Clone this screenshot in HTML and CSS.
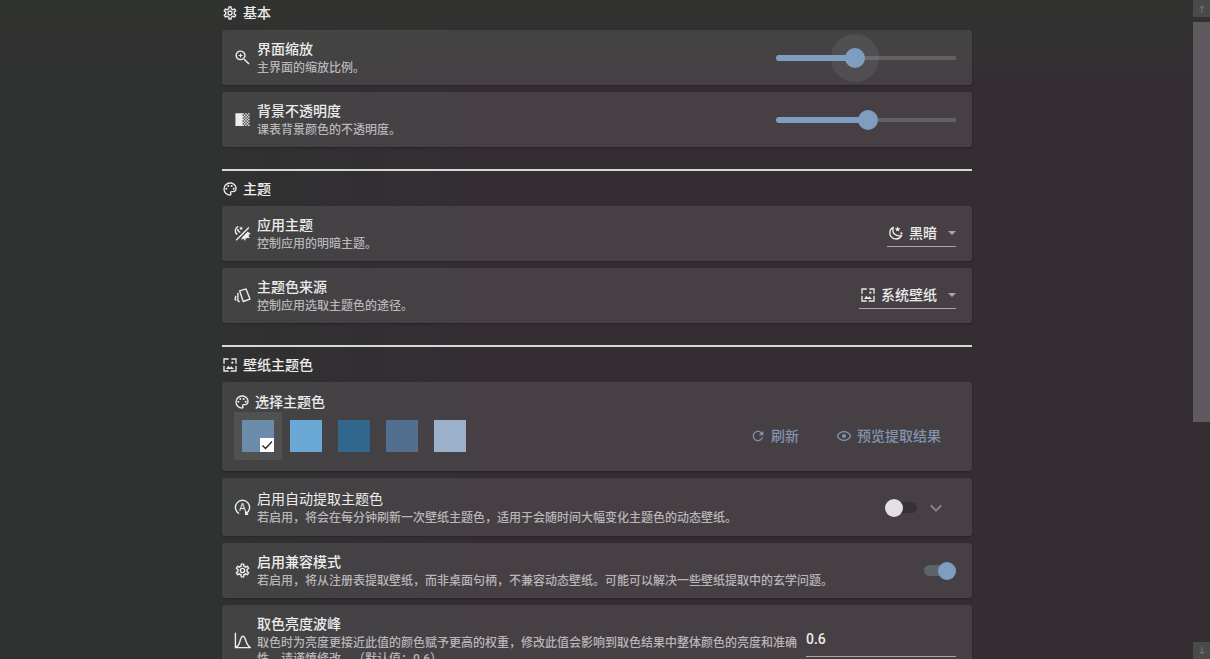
FILE: index.html
```html
<!DOCTYPE html>
<html lang="zh-CN">
<head>
<meta charset="utf-8">
<meta name="viewport" content="width=device-width, initial-scale=1">
<title>外观</title>
<link rel="stylesheet" href="styles.css">
</head>
<body>
<svg class="sprite" aria-hidden="true">
  <symbol id="cog" viewBox="0 0 24 24"><path d="M12,8A4,4 0 0,1 16,12A4,4 0 0,1 12,16A4,4 0 0,1 8,12A4,4 0 0,1 12,8M12,10A2,2 0 0,0 10,12A2,2 0 0,0 12,14A2,2 0 0,0 14,12A2,2 0 0,0 12,10M10,22C9.75,22 9.54,21.82 9.5,21.58L9.13,18.93C8.5,18.68 7.96,18.34 7.44,17.94L4.95,18.95C4.73,19.03 4.46,18.95 4.34,18.73L2.34,15.27C2.21,15.05 2.27,14.78 2.46,14.63L4.57,12.97L4.5,12L4.57,11L2.46,9.37C2.27,9.22 2.21,8.95 2.34,8.73L4.34,5.27C4.46,5.05 4.73,4.96 4.95,5.05L7.44,6.05C7.96,5.66 8.5,5.32 9.13,5.07L9.5,2.42C9.54,2.18 9.75,2 10,2H14C14.25,2 14.46,2.18 14.5,2.42L14.87,5.07C15.5,5.32 16.04,5.66 16.56,6.05L19.05,5.05C19.27,4.96 19.54,5.05 19.66,5.27L21.66,8.73C21.79,8.95 21.73,9.22 21.54,9.37L19.43,11L19.5,12L19.43,13L21.54,14.63C21.73,14.78 21.79,15.05 21.66,15.27L19.66,18.73C19.54,18.95 19.27,19.04 19.05,18.95L16.56,17.95C16.04,18.34 15.5,18.68 14.87,18.93L14.5,21.58C14.46,21.82 14.25,22 14,22H10M11.25,4L10.88,6.61C9.68,6.86 8.62,7.5 7.85,8.39L5.44,7.35L4.69,8.65L6.8,10.2C6.4,11.37 6.4,12.64 6.8,13.8L4.68,15.36L5.43,16.66L7.86,15.62C8.63,16.5 9.68,17.14 10.87,17.38L11.24,20H12.76L13.13,17.39C14.32,17.14 15.37,16.5 16.14,15.62L18.57,16.66L19.32,15.36L17.2,13.81C17.6,12.64 17.6,11.37 17.2,10.2L19.31,8.65L18.56,7.35L16.15,8.39C15.38,7.5 14.32,6.86 13.12,6.62L12.75,4H11.25Z"/></symbol>
  <symbol id="zoom" viewBox="0 0 24 24"><path d="M15.500,14L22,20.500L20.500,22L14,15.500V14.710L13.730,14.430C12.590,15.410 11.110,16 9.500,16A7,7 0 0,1 2,9A7,7 0 0,1 9.500,2A7,7 0 0,1 16.500,9.500C16.500,11.110 15.410,12.590 14.430,13.730L14.710,14H15.500M9.500,14C12,14 14.500,12 14.500,9.200C14.500,6.500 12,4 9.200,4C6.500,4 4,6.500 4,9.200C4,12 6.500,14 9.500,14M12,10H10V12H8.500V10H6.500V8.500H8.500V6.500H10V8.500H12V10Z"/></symbol>
  <symbol id="opacity" viewBox="0 0 24 24"><path d="M2,3H12V21H2ZM12,3h2v2h-2zM16,3h2v2h-2zM20,3h2v2h-2zM14,5h2v2h-2zM18,5h2v2h-2zM12,7h2v2h-2zM16,7h2v2h-2zM20,7h2v2h-2zM14,9h2v2h-2zM18,9h2v2h-2zM12,11h2v2h-2zM16,11h2v2h-2zM20,11h2v2h-2zM14,13h2v2h-2zM18,13h2v2h-2zM12,15h2v2h-2zM16,15h2v2h-2zM20,15h2v2h-2zM14,17h2v2h-2zM18,17h2v2h-2zM12,19h2v2h-2zM16,19h2v2h-2zM20,19h2v2h-2z"/></symbol>
  <symbol id="palette" viewBox="0 0 24 24"><path d="M12,22A10,10 0 0,1 2,12A10,10 0 0,1 12,2C17.5,2 22,6 22,11A6,6 0 0,1 16,17H14.2C13.9,17 13.7,17.2 13.7,17.5C13.7,17.6 13.8,17.7 13.8,17.8C14.2,18.3 14.4,18.9 14.4,19.5C14.5,20.9 13.4,22 12,22M12,4A8,8 0 0,0 4,12A8,8 0 0,0 12,20C12.3,20 12.5,19.8 12.5,19.5C12.5,19.3 12.4,19.2 12.4,19.1C12,18.6 11.8,18.1 11.8,17.5C11.8,16.1 12.9,15 14.3,15H16A4,4 0 0,0 20,11C20,7.1 16.4,4 12,4Z"/><circle cx="6.5" cy="11.5" r="1.5"/><circle cx="9.5" cy="7.5" r="1.5"/><circle cx="14.5" cy="7.5" r="1.5"/><circle cx="17.5" cy="11.5" r="1.5"/></symbol>
  <symbol id="light-dark" viewBox="0 0 24 24"><path fill="none" stroke="currentColor" stroke-width="2" d="M3,21.500L21,3.500M6,2C1,4 .5,10.500 4.500,13.500M5,5.500C5.500,8.500 7,10 9,10.500"/><path d="M10,2l.8,1.700 1.900.2-1.400,1.300.4,1.900-1.700-1-1.700,1 .4-1.900-1.400-1.300 1.900-.2zM19.500,9A5.500,5.500 0 0 1 11,17.500ZM20.500,10l3,2.500-3,1.500zM20,15l2.500,3.500-4-.5zM16.500,18.500l-.5,4-2.500-3zM11,18l2,1-2.500,3z"/></symbol>
  <symbol id="cards" viewBox="0 0 24 24"><path fill="none" stroke="currentColor" stroke-width="2" stroke-linejoin="round" d="M8,5.500L17,2.700L22.500,17L13,20.500ZM5.500,8V19.500L8,21M2.500,12.500L1.500,17L3,19"/></symbol>
  <symbol id="wallpaper" viewBox="0 0 24 24"><path fill="none" stroke="currentColor" stroke-width="2" d="M10,3H3V10M14,3H21V10M3,13V21H10M21,13V21H13"/><path d="M6,18L9.500,13L12,16L14,14L18,18Z"/><circle cx="15.500" cy="8.500" r="1.700"/></symbol>
  <symbol id="moon" viewBox="0 0 24 24"><path fill="none" stroke="currentColor" stroke-width="2" stroke-linejoin="round" d="M8,3.500C1,6.500 1,17 8,20C13,22 18,20 20.500,16C11,17.500 5,12 8,3.500Z"/><path d="M14.500,2l1.200,2.700 3,.3-2.200,2 .6,2.900-2.600-1.500-2.600,1.500.6-2.900-2.200-2 3-.3zM20,10l.7,1.600 1.800.2-1.300,1.200.3,1.700-1.500-.9-1.500.9.300-1.700-1.300-1.200 1.800-.2z"/></symbol>
  <symbol id="refresh" viewBox="0 0 24 24"><path d="M17.65,6.35C16.2,4.9 14.21,4 12,4A8,8 0 0,0 4,12A8,8 0 0,0 12,20C15.73,20 18.84,17.45 19.73,14H17.65C16.83,16.33 14.61,18 12,18A6,6 0 0,1 6,12A6,6 0 0,1 12,6C13.66,6 15.14,6.69 16.22,7.78L13,11H20V4L17.65,6.35Z"/></symbol>
  <symbol id="eye" viewBox="0 0 24 24"><path d="M12,9A3,3 0 0,1 15,12A3,3 0 0,1 12,15A3,3 0 0,1 9,12A3,3 0 0,1 12,9M12,4.500C17,4.500 21.270,7.610 23,12C21.270,16.390 17,19.500 12,19.500C7,19.500 2.730,16.390 1,12C2.730,7.610 7,4.500 12,4.500M3.180,12C4.830,15.360 8.240,17.500 12,17.500C15.760,17.500 19.170,15.360 20.820,12C19.170,8.640 15.760,6.500 12,6.500C8.240,6.500 4.830,8.640 3.180,12Z"/></symbol>
  <symbol id="auto" viewBox="0 0 24 24"><path fill="none" stroke="currentColor" stroke-width="2" d="M7,20.500A10,10 0 1 1 17,20.500M16.500,17V21.500H20"/><text class="auto-letter" x="12" y="17" text-anchor="middle">A</text></symbol>
  <symbol id="curve" viewBox="0 0 24 24"><path fill="none" stroke="currentColor" stroke-width="2" d="M2,1V22H24M3,21C9,21 8,6 12.500,6C17,6 16,18 22.500,21"/></symbol>
  <symbol id="chevron" viewBox="0 0 24 24"><path d="M7.410,8.580L12,13.170L16.590,8.580L18,10L12,16L6,10L7.410,8.580Z"/></symbol>
  <symbol id="check" viewBox="0 0 14 14"><path fill="none" stroke="currentColor" stroke-width="1.300" d="M2.500,7.500L5.500,10.500L12,3.500"/></symbol>
  <symbol id="caret" viewBox="0 0 8 4"><path d="M0,0H8L4,4Z"/></symbol>
  <symbol id="arrow-up" viewBox="0 0 8 8"><path fill="none" stroke="currentColor" d="M4,8V1M1.500,3.500L4,1L6.500,3.500"/></symbol>
  <symbol id="arrow-down" viewBox="0 0 8 8"><path fill="none" stroke="currentColor" d="M4,0V7M1.500,4.500L4,7L6.500,4.500"/></symbol>
</svg>

<div class="window">
  <main class="page">
    <div class="settings">
      <section class="group">
        <h2 class="group-title"><svg class="icon"><use href="#cog"/></svg>基本</h2>
        <div class="card">
          <svg class="card-icon"><use href="#zoom"/></svg>
          <div class="card-text">
            <label class="title" for="scale">界面缩放</label>
            <p class="desc">主界面的缩放比例。</p>
          </div>
          <input class="slider slider-active scale-fill" id="scale" type="range" min="0" max="100" value="43">
        </div>
        <div class="card">
          <svg class="card-icon"><use href="#opacity"/></svg>
          <div class="card-text">
            <label class="title" for="opacity-range">背景不透明度</label>
            <p class="desc">课表背景颜色的不透明度。</p>
          </div>
          <input class="slider opacity-fill" id="opacity-range" type="range" min="0" max="100" value="51">
        </div>
      </section>

      <section class="group">
        <h2 class="group-title"><svg class="icon"><use href="#palette"/></svg>主题</h2>
        <div class="card">
          <svg class="card-icon"><use href="#light-dark"/></svg>
          <div class="card-text">
            <label class="title" for="theme">应用主题</label>
            <p class="desc">控制应用的明暗主题。</p>
          </div>
          <div class="combo">
            <svg class="icon"><use href="#moon"/></svg>
            <select id="theme"><option>黑暗</option></select>
            <svg class="caret"><use href="#caret"/></svg>
          </div>
        </div>
        <div class="card">
          <svg class="card-icon"><use href="#cards"/></svg>
          <div class="card-text">
            <label class="title" for="source">主题色来源</label>
            <p class="desc">控制应用选取主题色的途径。</p>
          </div>
          <div class="combo">
            <svg class="icon"><use href="#wallpaper"/></svg>
            <select id="source"><option>系统壁纸</option></select>
            <svg class="caret"><use href="#caret"/></svg>
          </div>
        </div>
      </section>

      <section class="group">
        <h2 class="group-title"><svg class="icon"><use href="#wallpaper"/></svg>壁纸主题色</h2>
        <div class="card color-card">
          <h3 class="color-title"><svg class="icon"><use href="#palette"/></svg>选择主题色</h3>
          <div class="color-row">
            <div class="swatches" role="radiogroup" aria-label="选择主题色">
              <label class="swatch"><input type="radio" name="color" aria-label="颜色 1" checked><span class="chip chip-1"><svg class="tick"><use href="#check"/></svg></span></label>
              <label class="swatch"><input type="radio" name="color" aria-label="颜色 2"><span class="chip chip-2"><svg class="tick"><use href="#check"/></svg></span></label>
              <label class="swatch"><input type="radio" name="color" aria-label="颜色 3"><span class="chip chip-3"><svg class="tick"><use href="#check"/></svg></span></label>
              <label class="swatch"><input type="radio" name="color" aria-label="颜色 4"><span class="chip chip-4"><svg class="tick"><use href="#check"/></svg></span></label>
              <label class="swatch"><input type="radio" name="color" aria-label="颜色 5"><span class="chip chip-5"><svg class="tick"><use href="#check"/></svg></span></label>
            </div>
            <div class="actions">
              <button class="text-button" type="button"><svg class="icon"><use href="#refresh"/></svg>刷新</button>
              <button class="text-button" type="button"><svg class="icon"><use href="#eye"/></svg>预览提取结果</button>
            </div>
          </div>
        </div>
        <div class="card expander">
          <svg class="card-icon"><use href="#auto"/></svg>
          <div class="card-text">
            <label class="title" for="auto-extract">启用自动提取主题色</label>
            <p class="desc">若启用，将会在每分钟刷新一次壁纸主题色，适用于会随时间大幅变化主题色的动态壁纸。</p>
          </div>
          <input class="switch" id="auto-extract" type="checkbox">
          <button class="expand" type="button" aria-label="展开"><svg><use href="#chevron"/></svg></button>
        </div>
        <div class="card">
          <svg class="card-icon"><use href="#cog"/></svg>
          <div class="card-text">
            <label class="title" for="compat">启用兼容模式</label>
            <p class="desc">若启用，将从注册表提取壁纸，而非桌面句柄，不兼容动态壁纸。可能可以解决一些壁纸提取中的玄学问题。</p>
          </div>
          <input class="switch" id="compat" type="checkbox" checked>
        </div>
        <div class="card">
          <svg class="card-icon"><use href="#curve"/></svg>
          <div class="card-text">
            <label class="title" for="peak">取色亮度波峰</label>
            <p class="desc">取色时为亮度更接近此值的颜色赋予更高的权重，修改此值会影响到取色结果中整体颜色的亮度和准确性，请谨慎修改。（默认值：0.6）</p>
          </div>
          <input class="field" id="peak" type="text" value="0.6">
        </div>
      </section>
    </div>
  </main>
  <div class="scrollbar">
    <button class="scroll-button" type="button" aria-label="向上滚动"><svg><use href="#arrow-up"/></svg></button>
    <div class="scroll-track"><div class="scroll-thumb"></div></div>
    <button class="scroll-button" type="button" aria-label="向下滚动"><svg><use href="#arrow-down"/></svg></button>
  </div>
</div>
</body>
</html>
```

FILE: styles.css
```css
* {
  box-sizing: border-box;
}

:root {
  --accent: #7f9dbf;
  --text: #ececec;
  --muted: #b9b6b9;
}

body {
  margin: 0;
  color: var(--text);
  font: 500 14px/20px Roboto, "Noto Sans CJK SC", sans-serif;
  text-spacing-trim: space-all;
  background:
    linear-gradient(#313330 0, rgba(49, 51, 48, 0) 80px),
    linear-gradient(90deg, #303131 0, #303131 220px, #342e33 480px);
}

h2, h3, p {
  margin: 0;
}

button, input, select {
  margin: 0;
  padding: 0;
  border: 0;
  background: none;
  color: inherit;
  font: inherit;
}

svg {
  display: block;
  flex: none;
  fill: currentColor;
}

.sprite {
  display: none;
}

.icon {
  width: 16px;
  height: 16px;
}

.auto-letter {
  font: 400 15px Roboto, sans-serif;
}

.window {
  display: flex;
  height: 100vh;
}

.page {
  flex: 1;
  min-width: 0;
  padding: 3px 15px 16px 16px;
  overflow-y: auto;
  scrollbar-width: none;
}

.settings {
  max-width: 750px;
  margin: 0 auto;
}

.group {
  display: flex;
  flex-direction: column;
  gap: 7px;
}

.group + .group {
  margin-top: 22px;
  padding-top: 8px;
  border-top: 2px solid #d8d8d8;
}

.group-title,
.color-title {
  display: flex;
  align-items: center;
  gap: 5px;
  font-size: 14px;
  font-weight: 500;
}

.card {
  display: flex;
  align-items: center;
  padding: 9px 16px 9px 12px;
  border-radius: 3px;
  background: rgba(255, 255, 255, 0.09);
  box-shadow: 0 1px 2px rgba(0, 0, 0, 0.25);
}

.card-icon {
  width: 17px;
  height: 17px;
  margin-right: 6px;
}

.card-text {
  flex: 1;
  min-width: 0;
  margin-right: 8px;
}

.title {
  display: block;
  margin-bottom: 1px;
}

.desc {
  color: var(--muted);
  font-size: 12px;
  line-height: 16px;
}

.slider {
  width: 180px;
  height: 20px;
  appearance: none;
}

.slider::-webkit-slider-runnable-track {
  height: 6px;
  border-radius: 3px;
  background:
    linear-gradient(var(--accent), var(--accent)) left / var(--fill) 6px no-repeat,
    linear-gradient(#626163, #626163) center / 100% 4px no-repeat;
}

.slider::-webkit-slider-thumb {
  width: 20px;
  height: 20px;
  margin-top: -7px;
  border-radius: 50%;
  background: var(--accent);
  appearance: none;
}

.slider-active::-webkit-slider-thumb {
  box-shadow: 0 0 0 14px rgba(150, 160, 160, 0.14);
}

.scale-fill {
  --fill: 44%;
}

.opacity-fill {
  --fill: 51%;
}

.combo {
  display: flex;
  align-items: center;
  height: 27px;
  padding-left: 1px;
  border-bottom: 1px solid #aaa6aa;
}

.combo select {
  margin: 0 11px 0 5px;
  appearance: none;
}

.caret {
  width: 8px;
  height: 4px;
  color: #aaa6aa;
}

.color-card {
  display: block;
  padding: 10px 15px 11px 12px;
}

.color-row {
  display: flex;
  align-items: center;
  justify-content: space-between;
}

.swatches {
  display: flex;
}

.swatch {
  display: block;
  padding: 8px;
}

.swatch:has(:checked) {
  background: rgba(255, 255, 255, 0.08);
}

.swatch input {
  position: absolute;
  opacity: 0;
}

.chip {
  display: flex;
  align-items: flex-end;
  justify-content: flex-end;
  width: 32px;
  height: 32px;
}

.chip-1 { background: #6c8cab; }
.chip-2 { background: #6aa8d6; }
.chip-3 { background: #32678d; }
.chip-4 { background: #526f90; }
.chip-5 { background: #9bb0ca; }

.tick {
  display: none;
  width: 14px;
  height: 14px;
  background: #fff;
  color: #222;
}

:checked + .chip .tick {
  display: block;
}

.actions {
  display: flex;
  gap: 5px;
}

.text-button {
  display: flex;
  align-items: center;
  gap: 5px;
  padding: 6px 16px;
  color: #8093ae;
}

.expander {
  padding: 11px 24px 10px 12px;
}

.expander .title {
  font-weight: 400;
}

.switch {
  display: flex;
  align-items: center;
  width: 32px;
  height: 11px;
  border-radius: 6px;
  background: #353136;
  appearance: none;
}

.switch::before {
  content: "";
  width: 18px;
  height: 18px;
  border-radius: 50%;
  background: #e4dfe4;
}

.switch:checked {
  justify-content: flex-end;
  background: #5a6567;
}

.switch:checked::before {
  background: var(--accent);
}

.expand {
  width: 24px;
  height: 24px;
  margin-left: 7px;
  color: #858085;
}

.expand svg {
  width: 24px;
  height: 24px;
}

.field {
  width: 150px;
  height: 33px;
  padding-bottom: 2px;
  border-bottom: 1px solid #aaa6aa;
}

.scrollbar {
  display: flex;
  flex-direction: column;
  width: 17px;
}

.scroll-button {
  display: flex;
  align-items: center;
  justify-content: center;
  height: 17px;
  background: #4b4a4b;
  color: #777577;
}

.scroll-button svg {
  width: 8px;
  height: 8px;
}

.scroll-track {
  flex: 1;
  padding-top: 5px;
}

.scroll-thumb {
  height: 400px;
  max-height: 65%;
  background: #5f5a5f;
}
```
